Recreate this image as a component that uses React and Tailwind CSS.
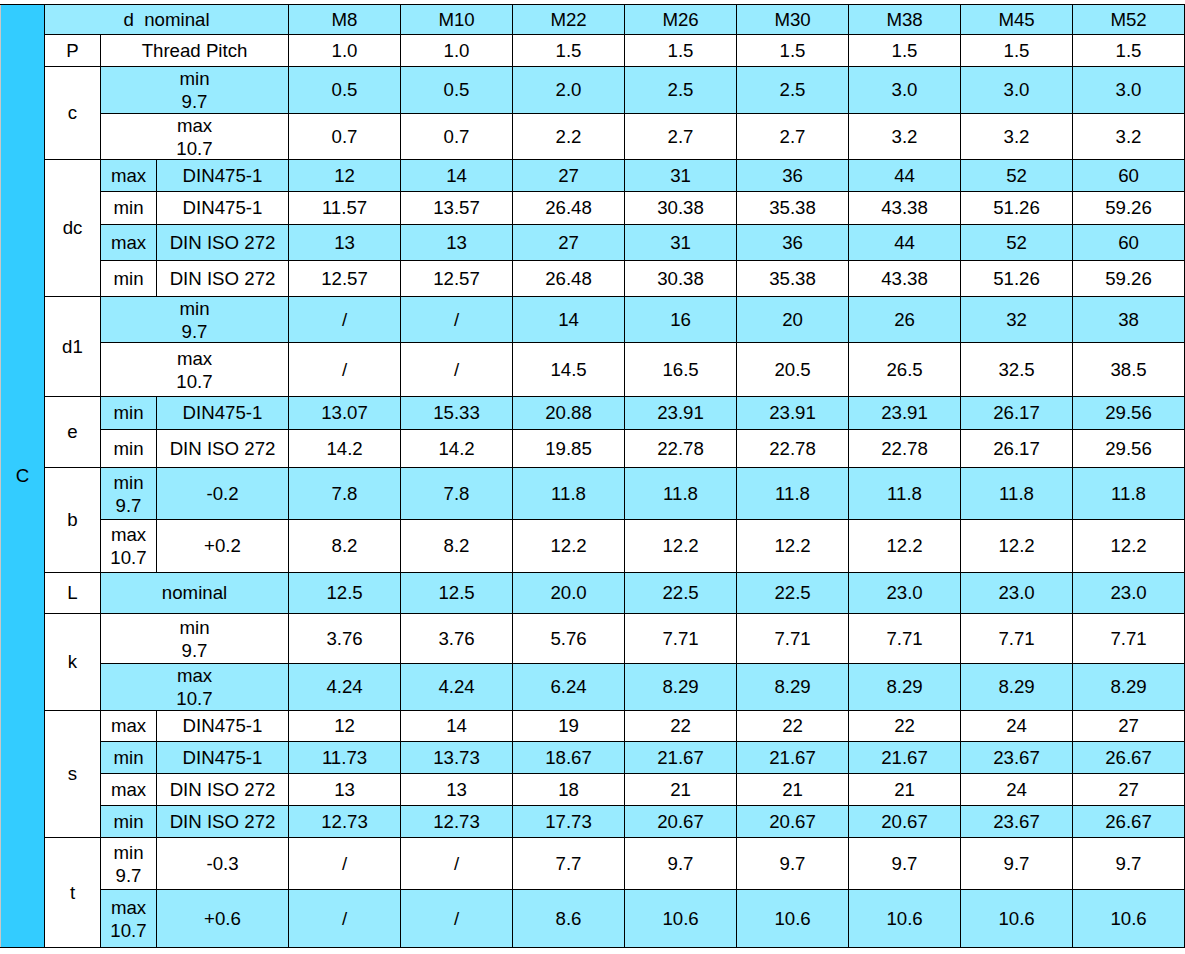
import React from "react";

// dimension table for the nut sizes
const sizes = ["M8", "M10", "M22", "M26", "M30", "M38", "M45", "M52"];

const rows = [
  { h: 32, lab: "P", span: 1, sub: [{ t: ["Thread Pitch"], c: 2 }], v: ["1.0", "1.0", "1.5", "1.5", "1.5", "1.5", "1.5", "1.5"] },
  { h: 47, lab: "c", span: 2, blue: true, sub: [{ t: ["min", "9.7"], c: 2 }], v: ["0.5", "0.5", "2.0", "2.5", "2.5", "3.0", "3.0", "3.0"] },
  { h: 46, sub: [{ t: ["max", "10.7"], c: 2 }], v: ["0.7", "0.7", "2.2", "2.7", "2.7", "3.2", "3.2", "3.2"] },
  { h: 32, lab: "dc", span: 4, blue: true, sub: [{ t: ["max"] }, { t: ["DIN475-1"] }], v: ["12", "14", "27", "31", "36", "44", "52", "60"] },
  { h: 33, sub: [{ t: ["min"] }, { t: ["DIN475-1"] }], v: ["11.57", "13.57", "26.48", "30.38", "35.38", "43.38", "51.26", "59.26"] },
  { h: 36, blue: true, sub: [{ t: ["max"] }, { t: ["DIN ISO 272"] }], v: ["13", "13", "27", "31", "36", "44", "52", "60"] },
  { h: 36, sub: [{ t: ["min"] }, { t: ["DIN ISO 272"] }], v: ["12.57", "12.57", "26.48", "30.38", "35.38", "43.38", "51.26", "59.26"] },
  { h: 46, lab: "d1", span: 2, blue: true, sub: [{ t: ["min", "9.7"], c: 2 }], v: ["/", "/", "14", "16", "20", "26", "32", "38"] },
  { h: 54, sub: [{ t: ["max", "10.7"], c: 2 }], v: ["/", "/", "14.5", "16.5", "20.5", "26.5", "32.5", "38.5"] },
  { h: 33, lab: "e", span: 2, blue: true, sub: [{ t: ["min"] }, { t: ["DIN475-1"] }], v: ["13.07", "15.33", "20.88", "23.91", "23.91", "23.91", "26.17", "29.56"] },
  { h: 38, sub: [{ t: ["min"] }, { t: ["DIN ISO 272"] }], v: ["14.2", "14.2", "19.85", "22.78", "22.78", "22.78", "26.17", "29.56"] },
  { h: 52, lab: "b", span: 2, blue: true, sub: [{ t: ["min", "9.7"] }, { t: ["-0.2"] }], v: ["7.8", "7.8", "11.8", "11.8", "11.8", "11.8", "11.8", "11.8"] },
  { h: 53, sub: [{ t: ["max", "10.7"] }, { t: ["+0.2"] }], v: ["8.2", "8.2", "12.2", "12.2", "12.2", "12.2", "12.2", "12.2"] },
  { h: 41, lab: "L", span: 1, blue: true, sub: [{ t: ["nominal"], c: 2 }], v: ["12.5", "12.5", "20.0", "22.5", "22.5", "23.0", "23.0", "23.0"] },
  { h: 50, lab: "k", span: 2, sub: [{ t: ["min", "9.7"], c: 2 }], v: ["3.76", "3.76", "5.76", "7.71", "7.71", "7.71", "7.71", "7.71"] },
  { h: 47, blue: true, sub: [{ t: ["max", "10.7"], c: 2 }], v: ["4.24", "4.24", "6.24", "8.29", "8.29", "8.29", "8.29", "8.29"] },
  { h: 31, lab: "s", span: 4, sub: [{ t: ["max"] }, { t: ["DIN475-1"] }], v: ["12", "14", "19", "22", "22", "22", "24", "27"] },
  { h: 32, blue: true, sub: [{ t: ["min"] }, { t: ["DIN475-1"] }], v: ["11.73", "13.73", "18.67", "21.67", "21.67", "21.67", "23.67", "26.67"] },
  { h: 32, sub: [{ t: ["max"] }, { t: ["DIN ISO 272"] }], v: ["13", "13", "18", "21", "21", "21", "24", "27"] },
  { h: 32, blue: true, sub: [{ t: ["min"] }, { t: ["DIN ISO 272"] }], v: ["12.73", "12.73", "17.73", "20.67", "20.67", "20.67", "23.67", "26.67"] },
  { h: 52, lab: "t", span: 2, sub: [{ t: ["min", "9.7"] }, { t: ["-0.3"] }], v: ["/", "/", "7.7", "9.7", "9.7", "9.7", "9.7", "9.7"] },
  { h: 58, blue: true, sub: [{ t: ["max", "10.7"] }, { t: ["+0.6"] }], v: ["/", "/", "8.6", "10.6", "10.6", "10.6", "10.6", "10.6"] },
];

function Lines({ t }) {
  if (t.length === 1) return t[0];
  return (
    <div className="-my-[2px] leading-[23px]">
      {t.map((l, i) => (
        <div key={i}>{l}</div>
      ))}
    </div>
  );
}

export default function App() {
  const cell = "border border-black p-0 text-center align-middle";
  return (
    <div className="bg-white pt-1 font-['Liberation_Sans',Arial,sans-serif] text-[18.67px] text-black">
      <table className="table-fixed border-collapse w-[1185px]">
        <colgroup>
          <col className="w-[44px]" />
          <col className="w-[56px]" />
          <col className="w-[56px]" />
          <col className="w-[132px]" />
          {sizes.map((s) => (
            <col key={s} className="w-[112px]" />
          ))}
        </colgroup>
        <tbody>
          <tr className="h-[30px]">
            <td
              rowSpan={rows.length + 1}
              className="border border-black border-l-[#c8c8c8] bg-[#33ccff] p-0 text-center align-middle"
            >
              C
            </td>
            <td colSpan={3} className={`${cell} bg-[#99ebff] whitespace-pre`}>
              {"d  nominal"}
            </td>
            {sizes.map((s) => (
              <td key={s} className={`${cell} bg-[#99ebff]`}>
                {s}
              </td>
            ))}
          </tr>
          {rows.map((r, i) => {
            const bg = r.blue ? "bg-[#99ebff]" : "bg-white";
            return (
              <tr key={i} style={{ height: r.h }}>
                {r.lab && (
                  <td rowSpan={r.span} className={`${cell} bg-white`}>
                    {r.lab}
                  </td>
                )}
                {r.sub.map((s, j) => (
                  <td key={j} colSpan={s.c || 1} className={`${cell} ${bg}`}>
                    <Lines t={s.t} />
                  </td>
                ))}
                {r.v.map((v, j) => (
                  <td key={j} className={`${cell} ${bg}`}>
                    {v}
                  </td>
                ))}
              </tr>
            );
          })}
        </tbody>
      </table>
    </div>
  );
}
